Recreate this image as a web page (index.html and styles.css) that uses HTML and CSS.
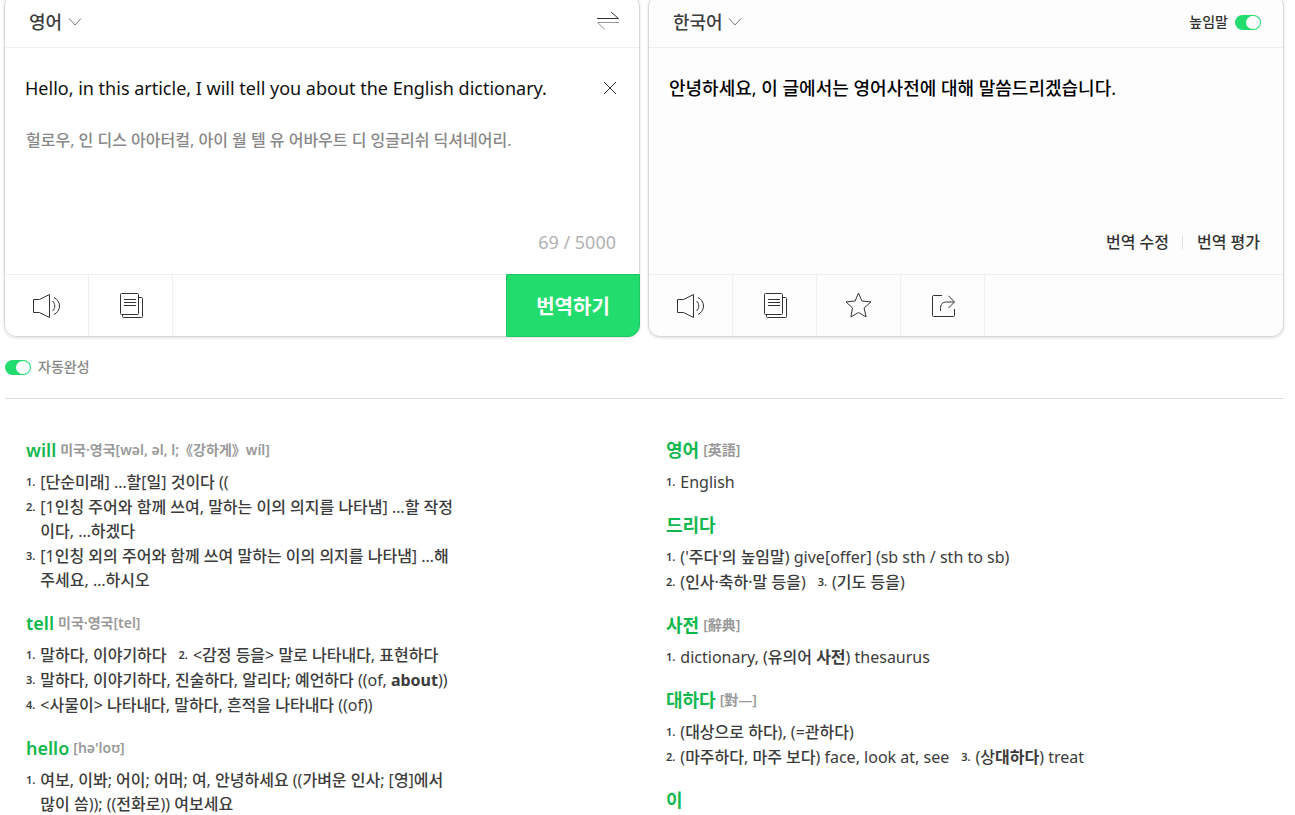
FILE: index.html
```html
<!DOCTYPE html>
<html lang="ko">
<head>
<meta charset="utf-8">
<title>번역기</title>
<link rel="stylesheet" href="styles.css">
</head>
<body>
<svg class="sprite" aria-hidden="true">
  <symbol id="chevron" viewBox="0 0 14 10"><path d="M1 1.500l6 6.500 6-6.500"/></symbol>
  <symbol id="speaker" viewBox="0 0 28 26"><path d="M.5 6.500h6l10-5v23l-10-5h-6zM19.500 8c3 2.500 3 7.500 0 10M21 4.500c3 1.500 5.500 4.500 5.500 8.500s-2.500 7-5.500 8.500"/></symbol>
  <symbol id="book" viewBox="0 0 24 26"><path d="M2.500.5h16a1 1 0 0 1 1 1v19a1 1 0 0 1-1 1h-16a1 1 0 0 1-1-1v-19a1 1 0 0 1 1-1zM19.500 4.500h3a1 1 0 0 1 1 1v18a1 1 0 0 1-1 1h-18a1 1 0 0 1-1-1v-2M5 6.500h12M5 9.500h12M5 12.500h12"/></symbol>
  <symbol id="star" viewBox="0 0 28 28"><path d="M13.500 1l3.400 8 9.100.9-6.900 6.100 2 8.900-7.600-4.400-7.600 4.400 1.600-8.900-6.500-6.100 9.100-.9z"/></symbol>
  <symbol id="share" viewBox="0 0 26 24"><path d="M12 1.500H3.500a1 1 0 0 0-1 1v19a1 1 0 0 0 1 1h20a1 1 0 0 0 1-1V15M10.500 17v-2.500c0-4 2-6.500 6-6.500H24M18.500 1.800L24.500 8l-6 6"/></symbol>
</svg>

<main class="page">
  <div class="translator">
    <section class="panel" aria-label="원문">
      <header class="panel-head">
        <label class="lang">
          <select class="lang-select" aria-label="원문 언어"><option>영어</option></select>
          <svg class="chevron"><use href="#chevron"/></svg>
        </label>
        <button class="icon-btn" type="button" aria-label="언어 바꾸기">
          <svg class="swap" viewBox="0 0 24 20"><path d="M1 6.500h21.500L15 0"/><path class="swap-back" d="M23 10.500H1.500L9 17.500"/></svg>
        </button>
      </header>
      <div class="panel-body">
        <div class="source-row">
          <textarea class="source" rows="1" aria-label="번역할 내용">Hello, in this article, I will tell you about the English dictionary.</textarea>
          <button class="icon-btn" type="button" aria-label="지우기">
            <svg class="clear" viewBox="0 0 14 14"><path d="M1 1l12 12M13 1L1 13"/></svg>
          </button>
        </div>
        <p class="reading">헐로우, 인 디스 아아터컬, 아이 월 텔 유 어바우트 디 잉글리쉬 딕셔네어리.</p>
        <p class="counter">69 / 5000</p>
      </div>
      <footer class="tools">
        <button class="tool" type="button" aria-label="듣기"><svg class="speaker"><use href="#speaker"/></svg></button>
        <button class="tool" type="button" aria-label="사전"><svg class="book"><use href="#book"/></svg></button>
        <button class="submit" type="button">번역하기</button>
      </footer>
    </section>

    <section class="panel panel-result" aria-label="번역 결과">
      <header class="panel-head">
        <label class="lang">
          <select class="lang-select" aria-label="번역 언어"><option>한국어</option></select>
          <svg class="chevron"><use href="#chevron"/></svg>
        </label>
        <label class="switch switch-end">높임말 <input class="toggle" type="checkbox" checked></label>
      </header>
      <div class="panel-body">
        <p class="result">안녕하세요, 이 글에서는 영어사전에 대해 말씀드리겠습니다.</p>
        <div class="actions">
          <a class="action" href="#edit">번역 수정</a>
          <a class="action" href="#rate">번역 평가</a>
        </div>
      </div>
      <footer class="tools">
        <button class="tool" type="button" aria-label="듣기"><svg class="speaker"><use href="#speaker"/></svg></button>
        <button class="tool" type="button" aria-label="사전"><svg class="book"><use href="#book"/></svg></button>
        <button class="tool" type="button" aria-label="즐겨찾기"><svg class="star"><use href="#star"/></svg></button>
        <button class="tool" type="button" aria-label="공유"><svg class="share"><use href="#share"/></svg></button>
      </footer>
    </section>
  </div>

  <div class="options">
    <label class="switch"><input class="toggle" type="checkbox" checked> 자동완성</label>
  </div>

  <div class="dictionary">
    <div class="column">
      <article class="entry">
        <h2 class="word">will <span class="sound">미국·영국[wəl, əl, l;《강하게》wíl]</span></h2>
        <ol class="senses">
          <li class="sense"><span class="num">1.</span><span>[단순미래] …할[일] 것이다 ((</span></li>
          <li class="sense"><span class="num">2.</span><span>[1인칭 주어와 함께 쓰여, 말하는 이의 의지를 나타냄] …할 작정이다, …하겠다</span></li>
          <li class="sense"><span class="num">3.</span><span>[1인칭 외의 주어와 함께 쓰여 말하는 이의 의지를 나타냄] …해 주세요, …하시오</span></li>
        </ol>
      </article>
      <article class="entry">
        <h2 class="word">tell <span class="sound">미국·영국[tel]</span></h2>
        <ol class="senses">
          <li class="sense"><span class="num">1.</span><span>말하다, 이야기하다</span></li>
          <li class="sense"><span class="num">2.</span><span>&lt;감정 등을&gt; 말로 나타내다, 표현하다</span></li>
          <li class="sense"><span class="num">3.</span><span>말하다, 이야기하다, 진술하다, 알리다; 예언하다 ((of, <b>about</b>))</span></li>
          <li class="sense"><span class="num">4.</span><span>&lt;사물이&gt; 나타내다, 말하다, 흔적을 나타내다 ((of))</span></li>
        </ol>
      </article>
      <article class="entry">
        <h2 class="word">hello <span class="sound">[hə'loʊ]</span></h2>
        <ol class="senses">
          <li class="sense"><span class="num">1.</span><span>여보, 이봐; 어이; 어머; 여, 안녕하세요 ((가벼운 인사; [영]에서 많이 씀)); ((전화로)) 여보세요</span></li>
        </ol>
      </article>
    </div>

    <div class="column">
      <article class="entry">
        <h2 class="word">영어 <span class="sound">[英語]</span></h2>
        <ol class="senses">
          <li class="sense"><span class="num">1.</span><span>English</span></li>
        </ol>
      </article>
      <article class="entry">
        <h2 class="word">드리다</h2>
        <ol class="senses">
          <li class="sense"><span class="num">1.</span><span>('주다'의 높임말) give[offer] (sb sth / sth to sb)</span></li>
          <li class="sense"><span class="num">2.</span><span>(인사·축하·말 등을)</span></li>
          <li class="sense"><span class="num">3.</span><span>(기도 등을)</span></li>
        </ol>
      </article>
      <article class="entry">
        <h2 class="word">사전 <span class="sound">[辭典]</span></h2>
        <ol class="senses">
          <li class="sense"><span class="num">1.</span><span>dictionary, (유의어 <b>사전</b>) thesaurus</span></li>
        </ol>
      </article>
      <article class="entry">
        <h2 class="word">대하다 <span class="sound">[對—]</span></h2>
        <ol class="senses">
          <li class="sense"><span class="num">1.</span><span>(대상으로 하다), (=관하다)</span></li>
          <li class="sense"><span class="num">2.</span><span>(마주하다, 마주 보다) face, look at, see</span></li>
          <li class="sense"><span class="num">3.</span><span>(상<b>대하다</b>) treat</span></li>
        </ol>
      </article>
      <article class="entry">
        <h2 class="word">이</h2>
      </article>
    </div>
  </div>
</main>
</body>
</html>
```

FILE: styles.css
```css
* { box-sizing: border-box; }

html { overflow: hidden; }

body {
  margin: 0;
  background: #fff;
  color: #3c3c3c;
  font: 400 16px/24px "Noto Sans", "Noto Sans CJK KR Medium", "Noto Sans CJK KR", sans-serif;
}

p, h2, ol { margin: 0; padding: 0; }

b { font-family: "Noto Sans", "Noto Sans CJK KR", sans-serif; }

button, select, textarea { font: inherit; color: inherit; }

svg { display: block; fill: none; stroke: #333; }

.sprite { display: none; }

.page { padding: 0 11px 0 4px; }

/* Translator panels */
.translator {
  display: grid;
  grid-template-columns: 1fr 1fr;
  gap: 8px;
  margin-top: -6px;
}

.panel {
  display: flex;
  flex-direction: column;
  border: 1px solid #d8d8d8;
  border-radius: 12px;
  box-shadow: 0 1px 3px rgba(0, 0, 0, .12);
}

.panel-result { background: #fdfdfd; }

.panel-head {
  display: flex;
  align-items: center;
  justify-content: space-between;
  padding: 14px 19px 12px 24px;
  border-bottom: 1px solid #efefef;
}

.lang { display: flex; align-items: center; gap: 5px; }

.lang-select {
  appearance: none;
  padding: 0;
  border: 0;
  background: none;
  font-size: 18px;
  line-height: 26px;
}

.chevron { width: 14px; height: 10px; stroke: #777; }

.icon-btn { padding: 0; border: 0; background: none; }

.swap { width: 24px; height: 20px; }
.swap-back { stroke: #999; }
.clear { width: 14px; height: 14px; }

.panel-body {
  display: flex;
  flex-direction: column;
  min-height: 226px;
  padding: 26px 22px 18px 20px;
}

.source-row {
  display: flex;
  align-items: center;
  gap: 20px;
}

.source {
  flex: 1;
  height: 28px;
  padding: 0;
  border: 0;
  outline: 0;
  background: none;
  resize: none;
  overflow: hidden;
  color: #111;
  font-size: 18px;
  line-height: 28px;
}

.reading { padding: 26px 0 0 1px; color: #888; }

.counter {
  margin-top: auto;
  padding-right: 1px;
  color: #b2b2b2;
  font-size: 18px;
  line-height: 28px;
  text-align: right;
}

.result { color: #000; font-size: 18px; line-height: 28px; }

.actions {
  display: flex;
  justify-content: flex-end;
  align-items: center;
  margin-top: auto;
  padding-right: 1px;
}

.action {
  display: flex;
  align-items: center;
  color: #333;
  line-height: 28px;
  text-decoration: none;
}

.action + .action::before {
  content: "";
  width: 1px;
  height: 13px;
  margin: 0 14px 0 13px;
  background: #ddd;
}

.tools {
  display: flex;
  min-height: 62px;
  border-top: 1px solid #efefef;
}

.tool {
  display: grid;
  place-items: center;
  width: 84px;
  padding: 0;
  border: 0;
  border-right: 1px solid #efefef;
  background: none;
}

.speaker { width: 28px; height: 26px; }
.book { width: 24px; height: 26px; }
.star { width: 28px; height: 28px; }
.share { width: 26px; height: 24px; }

.submit {
  width: 134px;
  margin: -1px -1px -1px auto;
  border: 1px solid #1fc665;
  border-bottom-right-radius: 12px;
  background: #22dc6d;
  color: #fff;
  font-family: "Noto Sans CJK KR", sans-serif;
  font-size: 20px;
  font-weight: 700;
}

/* Switches */
.switch {
  display: flex;
  align-items: center;
  gap: 7px;
  color: #888;
  font-size: 14px;
}

.switch-end { color: #333; padding-right: 3px; }

.toggle {
  appearance: none;
  display: flex;
  justify-content: flex-end;
  width: 26px;
  height: 15px;
  margin: 0;
  padding: 1px;
  border-radius: 8px;
  background: #22dc6d;
}

.toggle::before {
  content: "";
  width: 14px;
  height: 13px;
  border-radius: 7px;
  background: #fff;
}

.options {
  margin-left: 1px;
  padding: 18px 0 19px;
  border-bottom: 1px solid #ddd;
}

/* Dictionary results */
.dictionary {
  display: grid;
  grid-template-columns: 1fr 1fr;
  padding-top: 39px;
}

.column {
  display: flex;
  flex-direction: column;
  gap: 19px;
  max-width: 452px;
  padding-left: 22px;
}

.entry { display: flex; flex-direction: column; gap: 8px; }

.word {
  display: flex;
  align-items: center;
  gap: 4px;
  color: #12b84d;
  font-family: "Noto Sans", "Noto Sans CJK KR", sans-serif;
  font-size: 18px;
  font-weight: 600;
  line-height: 24px;
}

.sound { color: #999; font-size: 14px; }

.senses {
  display: flex;
  flex-wrap: wrap;
  gap: 1px 12px;
  list-style: none;
}

.sense { display: flex; gap: 5px; }

.num { flex: none; font-size: 11px; font-weight: 600; }
```
